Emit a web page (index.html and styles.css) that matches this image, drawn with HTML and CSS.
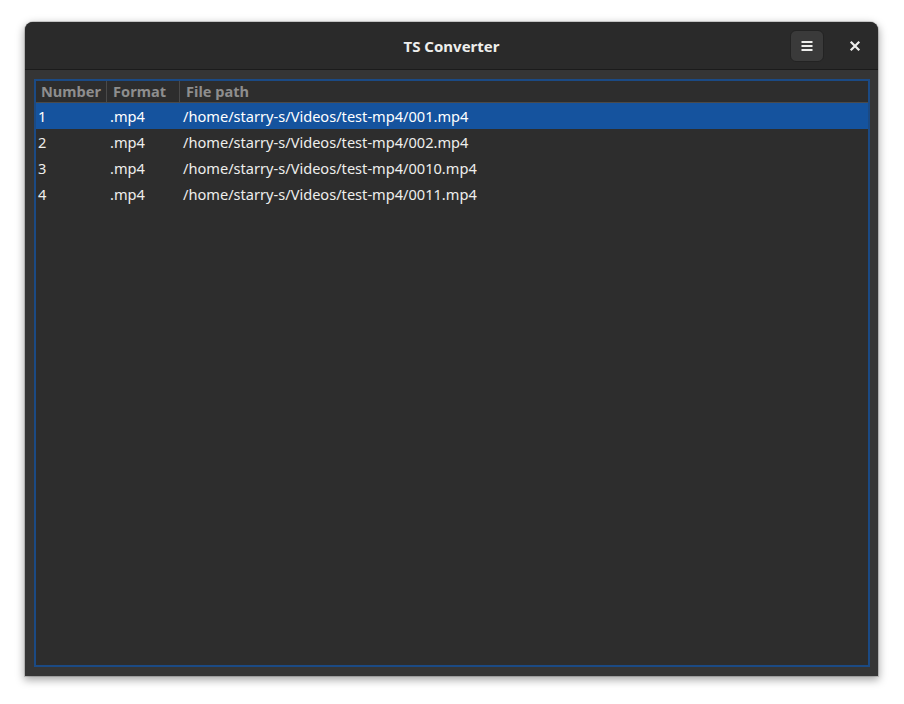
FILE: index.html
```html
<!DOCTYPE html>
<html>
<head>
<meta charset="utf-8">
<link rel="stylesheet" href="styles.css">
</head>
<body>
<div class="window">
  <div class="headerbar">
    <div class="title">TS Converter</div>
    <div class="actions">
      <button class="menu-btn" aria-label="menu">
        <svg width="16" height="16" viewBox="0 0 16 16"><rect x="2.5" y="3" width="11" height="2" fill="#eeeeec"/><rect x="2.5" y="7" width="11" height="2" fill="#eeeeec"/><rect x="2.5" y="11" width="11" height="2" fill="#eeeeec"/></svg>
      </button>
      <button class="close-btn" aria-label="close">
        <svg width="16" height="16" viewBox="0 0 16 16"><path d="M4.5 4.5 L11.5 11.5 M11.5 4.5 L4.5 11.5" stroke="#eeeeec" stroke-width="2.2" stroke-linecap="square"/></svg>
      </button>
    </div>
  </div>
  <div class="content">
    <div class="list">
      <div class="row head">
        <div class="c c1">Number</div>
        <div class="c c2">Format</div>
        <div class="c c3">File path</div>
      </div>
      <div class="row sel">
        <div class="c c1">1</div><div class="c c2">.mp4</div><div class="c c3">/home/starry-s/Videos/test-mp4/001.mp4</div>
      </div>
      <div class="row">
        <div class="c c1">2</div><div class="c c2">.mp4</div><div class="c c3">/home/starry-s/Videos/test-mp4/002.mp4</div>
      </div>
      <div class="row">
        <div class="c c1">3</div><div class="c c2">.mp4</div><div class="c c3">/home/starry-s/Videos/test-mp4/0010.mp4</div>
      </div>
      <div class="row">
        <div class="c c1">4</div><div class="c c2">.mp4</div><div class="c c3">/home/starry-s/Videos/test-mp4/0011.mp4</div>
      </div>
    </div>
  </div>
</div>
</body>
</html>
```
FILE: styles.css
```css
html, body {
  margin: 0;
  padding: 0;
  background: #ffffff;
}
body {
  font-family: "Noto Sans", "Open Sans", sans-serif;
  width: 904px;
  height: 704px;
  overflow: hidden;
}
.window {
  margin: 22px 0 0 25px;
  width: 853px;
  height: 654px;
  background: #353535;
  border-radius: 8px 8px 0 0;
  box-shadow: 0 3px 9px 1px rgba(0,0,0,0.35), 0 0 0 1px rgba(0,0,0,0.15);
  display: flex;
  flex-direction: column;
  overflow: hidden;
}
.headerbar {
  height: 47px;
  flex: 0 0 47px;
  background: #2a2a2a;
  border-bottom: 1px solid #1b1b1b;
  display: flex;
  align-items: center;
  justify-content: center;
  position: relative;
}
.title {
  color: #eeeeec;
  font-weight: 700;
  font-size: 15px;
}
.actions {
  position: absolute;
  right: 0;
  top: 0;
  height: 47px;
  display: flex;
  align-items: center;
  gap: 14px;
  padding-right: 6px;
}
.menu-btn, .close-btn {
  border: none;
  padding: 0;
  display: flex;
  align-items: center;
  justify-content: center;
  cursor: pointer;
}
.menu-btn {
  width: 34px;
  height: 32px;
  border-radius: 6px;
  background: #3a3a3a;
  border: 1px solid #232323;
  box-sizing: border-box;
}
.close-btn {
  width: 34px;
  height: 32px;
  background: transparent;
}
.content {
  flex: 1;
  padding: 9px 8px 9px 9px;
  display: flex;
}
.list {
  flex: 1;
  background: #2d2d2d;
  border: 2px solid #1b4a84;
  color: #eeeeec;
  font-size: 14.6px;
}
.row {
  display: flex;
  height: 26px;
  align-items: center;
}
.row.head {
  height: 21px;
  border-bottom: 1px solid #4a4a4a;
  color: #8e8e8e;
  font-weight: 700;
  background: #2d2d2d;
}
.row.head .c {
  height: 21px;
  line-height: 21px;
  padding-left: 5px;
  box-sizing: border-box;
}
.row.head .c2, .row.head .c3 {
  padding-left: 6px;
}
.row.head .c1, .row.head .c2 {
  border-right: 1px solid #4a4a4a;
}
.row.sel {
  background: #15539e;
  color: #ffffff;
}
.c { white-space: nowrap; padding-left: 2px; box-sizing: border-box; }
.c2, .c3 { padding-left: 3px; }
.c1 { width: 71px; }
.c2 { width: 73px; }
.c3 { flex: 1; }
```
